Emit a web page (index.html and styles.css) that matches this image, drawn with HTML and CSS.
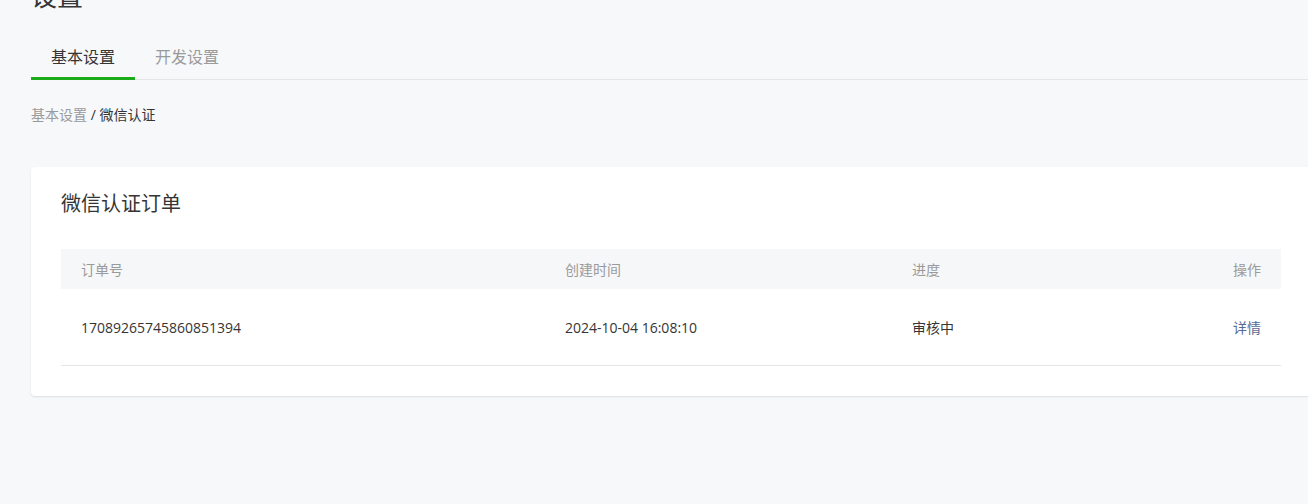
FILE: index.html
```html
<!DOCTYPE html>
<html lang="zh">
<head>
<meta charset="utf-8">
<link rel="stylesheet" href="styles.css">
</head>
<body>
<div class="page">
  <h1 class="title">设置</h1>
  <div class="tabs">
    <div class="tab active">基本设置</div>
    <div class="tab">开发设置</div>
  </div>
  <div class="crumb"><span class="crumb-link">基本设置</span> / 微信认证</div>
  <div class="card">
    <h2 class="card-title">微信认证订单</h2>
    <table class="table">
      <thead>
        <tr><th class="c1">订单号</th><th class="c2">创建时间</th><th class="c3">进度</th><th class="c4">操作</th></tr>
      </thead>
      <tbody>
        <tr><td class="c1">17089265745860851394</td><td class="c2">2024-10-04 16:08:10</td><td class="c3">审核中</td><td class="c4"><a class="link">详情</a></td></tr>
      </tbody>
    </table>
  </div>
</div>
</body>
</html>
```
FILE: styles.css
```css
html, body { margin: 0; padding: 0; }
body {
  background: #f7f8fa;
  font-family: "Open Sans", "Noto Sans CJK SC", sans-serif;
  color: #353535;
  overflow: hidden;
  width: 1308px;
  height: 504px;
}
.page {
  margin-left: 31px;
  width: 1280px;
  margin-top: -22px;
}
.title {
  margin: 0;
  font-size: 26px;
  font-weight: 400;
  line-height: 36px;
  color: #353535;
}
.tabs {
  display: flex;
  margin-top: 23px;
  border-bottom: 1px solid #e5e5e5;
}
.tab {
  padding: 0 20px;
  font-size: 16px;
  line-height: 40px;
  color: #9a9a9a;
  border-bottom: 3px solid transparent;
  margin-bottom: -1px;
}
.tab.active {
  color: #353535;
  border-bottom-color: #1aad19;
}
.crumb {
  margin-top: 25px;
  font-size: 14px;
  line-height: 20px;
  color: #353535;
}
.crumb-link { color: #9a9a9a; }
.card {
  margin-top: 42px;
  background: #fff;
  border-radius: 4px;
  box-shadow: 0 1px 2px rgba(0,0,0,0.1);
  padding: 22px 30px 30px;
}
.card-title {
  margin: 0;
  font-size: 20px;
  font-weight: 400;
  line-height: 30px;
  color: #353535;
}
.table {
  margin-top: 30px;
  width: 100%;
  border-collapse: collapse;
  font-size: 14px;
}
.table th {
  background: #f6f7f9;
  font-weight: 400;
  color: #9a9a9a;
  height: 40px;
  text-align: left;
  padding: 0 20px;
}
.table td {
  height: 76px;
  border-bottom: 1px solid #e7e7eb;
  padding: 0 20px;
  color: #353535;
}
.c1 { width: 444px; }
.c2 { width: 307px; }
.c4 { text-align: right !important; }
.link { color: #576b95; cursor: pointer; }
```
